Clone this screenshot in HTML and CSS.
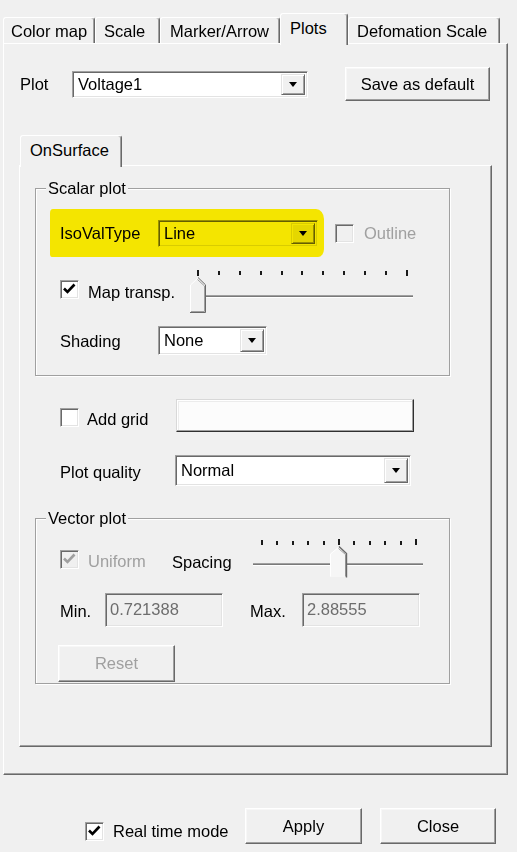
FILE: index.html
```html
<!DOCTYPE html>
<html lang="en">
<head>
<meta charset="utf-8">
<title>Plots</title>
<link rel="stylesheet" href="styles.css">
</head>
<body>
<div class="dialog">
  <div class="tabs">
    <div class="tab t-color">Color map</div>
    <div class="tab t-scale">Scale</div>
    <div class="tab t-marker">Marker/Arrow</div>
    <div class="tab active t-plots">Plots</div>
    <div class="tab t-deform">Defomation Scale</div>
  </div>
  <div class="pane">
    <div class="plot-row">
      <span class="plot-lbl">Plot</span>
      <div class="combo c-plot"><span class="val">Voltage1</span><span class="drop"><i class="tri"></i></span></div>
      <div class="btn save-btn">Save as default</div>
    </div>
    <div class="tabs inner-tabs">
      <div class="tab active t-onsurf">OnSurface</div>
    </div>
    <div class="inner-pane">
      <div class="group g-scalar">
        <div class="group-title">Scalar plot</div>
        <div class="iso-row">
          <div class="hl">
            <span class="iso-lbl">IsoValType</span>
            <div class="combo c-iso"><span class="val">Line</span><span class="drop"><i class="tri"></i></span></div>
          </div>
          <span class="check disabled outline-check"></span>
          <span class="dim outline-lbl">Outline</span>
        </div>
        <div class="slider-row">
          <span class="check mt-check"><svg width="17" height="17" viewBox="0 0 17 17"><path d="M3 7.5 L6.5 11 L13.5 3.5" fill="none" stroke="#000" stroke-width="2.6"/></svg></span>
          <span class="mt-lbl">Map transp.</span>
          <svg class="slider" width="230" height="50" viewBox="0 0 230 50">
            <g fill="#1a1a1a">
              <rect x="10" y="4" width="2" height="6"/>
              <rect x="31" y="5" width="2" height="4"/>
              <rect x="52" y="5" width="2" height="4"/>
              <rect x="73" y="5" width="2" height="4"/>
              <rect x="94" y="5" width="2" height="4"/>
              <rect x="114" y="5" width="2" height="4"/>
              <rect x="135" y="5" width="2" height="4"/>
              <rect x="156" y="5" width="2" height="4"/>
              <rect x="177" y="5" width="2" height="4"/>
              <rect x="198" y="5" width="2" height="4"/>
              <rect x="219" y="4" width="2" height="6"/>
            </g>
            <rect x="13" y="29" width="213" height="1" fill="#a0a0a0"/>
            <rect x="13" y="30" width="213" height="1" fill="#7a7a7a"/>
            <rect x="13" y="31" width="213" height="1" fill="#ffffff"/>
            <polygon points="3,46 3,19 10.5,12 18,19 18,46" fill="#f0f0f0"/>
            <polyline points="3.5,45.5 3.5,19 10.5,12.5" fill="none" stroke="#ffffff"/>
            <polyline points="10.5,13.5 17.5,20 17.5,45.5 4,45.5" fill="none" stroke="#a0a0a0"/>
            <polyline points="11,11.5 18.5,18.8 18.5,46.5 3,46.5" fill="none" stroke="#696969"/>
          </svg>
        </div>
        <div class="shading-row">
          <span class="shading-lbl">Shading</span>
          <div class="combo c-shading"><span class="val">None</span><span class="drop"><i class="tri"></i></span></div>
        </div>
      </div>
      <div class="grid-row">
        <span class="check grid-check"></span>
        <span class="grid-lbl">Add grid</span>
        <div class="color-btn"></div>
      </div>
      <div class="quality-row">
        <span class="quality-lbl">Plot quality</span>
        <div class="combo c-quality"><span class="val">Normal</span><span class="drop"><i class="tri"></i></span></div>
      </div>
      <div class="group g-vector">
        <div class="group-title">Vector plot</div>
        <div class="uniform-row">
          <span class="check disabled u-check"><svg width="17" height="17" viewBox="0 0 17 17"><path d="M3 7.5 L6.5 11 L13.5 3.5" fill="none" stroke="#a0a0a0" stroke-width="2.6"/></svg></span>
          <span class="dim uniform-lbl">Uniform</span>
          <span class="spacing-lbl">Spacing</span>
          <svg class="slider" width="176" height="46" viewBox="0 0 176 46">
            <g fill="#1a1a1a">
              <rect x="11" y="4" width="2" height="5"/>
              <rect x="26" y="5" width="2" height="4"/>
              <rect x="42" y="5" width="2" height="4"/>
              <rect x="57" y="5" width="2" height="4"/>
              <rect x="73" y="5" width="2" height="4"/>
              <rect x="88" y="3" width="2" height="6"/>
              <rect x="103" y="5" width="2" height="4"/>
              <rect x="119" y="5" width="2" height="4"/>
              <rect x="134" y="5" width="2" height="4"/>
              <rect x="150" y="5" width="2" height="4"/>
              <rect x="165" y="3" width="2" height="6"/>
            </g>
            <rect x="3" y="27" width="170" height="1" fill="#a0a0a0"/>
            <rect x="3" y="28" width="170" height="1" fill="#7a7a7a"/>
            <rect x="3" y="29" width="170" height="1" fill="#ffffff"/>
            <polygon points="80,41 80,18 88.5,11 97,18 97,41" fill="#f6f6f6"/>
            <polyline points="80.5,40.5 80.5,18 88.5,11.5" fill="none" stroke="#ffffff"/>
            <polyline points="88.5,12.5 95.5,18.5 95.5,40.5" fill="none" stroke="#a0a0a0"/>
            <polyline points="89,10.5 96.5,17.5 96.5,41.5" fill="none" stroke="#696969" stroke-width="1.4"/>
          </svg>
        </div>
        <div class="minmax-row">
          <span class="min-lbl">Min.</span>
          <div class="tbox">0.721388</div>
          <span class="max-lbl">Max.</span>
          <div class="tbox">2.88555</div>
        </div>
        <div class="btn reset-btn dim">Reset</div>
      </div>
    </div>
  </div>
  <div class="bottom-row">
    <span class="check rt-check"><svg width="17" height="17" viewBox="0 0 17 17"><path d="M3 7.5 L6.5 11 L13.5 3.5" fill="none" stroke="#000" stroke-width="2.6"/></svg></span>
    <span class="rt-lbl">Real time mode</span>
    <div class="btn apply-btn">Apply</div>
    <div class="btn close-btn">Close</div>
  </div>
</div>
</body>
</html>
```

FILE: styles.css
```css
* { box-sizing: border-box; }
html, body { margin: 0; padding: 0; }
body {
  width: 517px;
  height: 852px;
  overflow: hidden;
  background: #f0f0f0;
  font-family: "Liberation Sans", Arial, sans-serif;
  font-size: 16.5px;
  color: #000;
}
.dialog { padding-top: 13px; }

/* tabs */
.tabs { display: flex; align-items: flex-end; height: 30px; padding-left: 3px; }
.tab {
  height: 26px;
  padding: 1px 0 0 8px;
  line-height: 24px;
  border-top: 1px solid #fff;
  border-left: 1px solid #fff;
  border-right: 1px solid #696969;
  box-shadow: inset -1px 0 #a0a0a0;
  border-radius: 3px 3px 0 0;
  white-space: nowrap;
  background: #f0f0f0;
}
.tab.active {
  height: 32px;
  margin-bottom: -2px;
  padding-top: 0;
  line-height: 28px;
  position: relative;
  z-index: 1;
}
.t-color { width: 92px; padding-left: 7px; }
.t-scale { width: 65px; }
.t-marker { width: 120px; padding-left: 9px; }
.t-plots { width: 68px; padding-left: 9px; }
.t-deform { width: 152px; }

/* panes */
.pane {
  margin-left: 3px;
  width: 505px;
  height: 732px;
  border: 1px solid;
  border-color: #fff #696969 #696969 #fff;
  box-shadow: inset -1px -1px #a0a0a0;
  padding: 23px 0 0 15px;
}
.plot-row { display: flex; align-items: center; height: 34px; }
.plot-lbl { width: 53px; padding: 1px 0 0 1px; }
.c-plot { width: 236px; height: 27px; }
.save-btn { margin-left: 37px; width: 145px; height: 34px; }

.inner-tabs { height: 32px; margin-top: 32px; padding-left: 0; }
.t-onsurf { width: 102px; margin-left: 1px; height: 34px; line-height: 30px; padding-left: 9px; }

.inner-pane {
  width: 473px;
  height: 582px;
  border: 1px solid;
  border-color: #fff #696969 #696969 #fff;
  box-shadow: inset -1px -1px #a0a0a0;
  padding: 22px 0 0 15px;
}

/* group boxes */
.group {
  width: 415px;
  border: 1px solid #a0a0a0;
  box-shadow: inset 1px 1px #fff, 1px 1px #fff;
}
.group-title {
  margin: -11px 0 0 10px;
  padding: 0 2px;
  line-height: 20px;
  background: #f0f0f0;
  width: fit-content;
}
.g-scalar { height: 188px; }
.g-vector { height: 166px; margin-top: 32px; }

/* controls */
.combo {
  display: flex;
  border: 1px solid;
  border-color: #a0a0a0 #fff #fff #a0a0a0;
  box-shadow: inset 1px 1px #696969, inset -1px -1px #e3e3e3;
  background: #fff;
  padding: 2px;
}
.combo .val { flex: 1; display: flex; align-items: center; padding-left: 3px; }
.combo .drop {
  width: 24px;
  display: flex;
  align-items: center;
  justify-content: center;
  background: #f0f0f0;
  border: 1px solid;
  border-color: #e3e3e3 #696969 #696969 #e3e3e3;
  box-shadow: inset 1px 1px #fff, inset -1px -1px #a0a0a0;
}
.tri {
  display: block;
  width: 0;
  height: 0;
  border-left: 4.5px solid transparent;
  border-right: 4.5px solid transparent;
  border-top: 5px solid #000;
}
.btn {
  display: flex;
  align-items: center;
  justify-content: center;
  background: #f0f0f0;
  border: 1px solid;
  border-color: #fff #696969 #696969 #fff;
  box-shadow: inset -1px -1px #a0a0a0, inset 1px 1px #f7f7f7;
}
.check {
  display: block;
  flex: none;
  width: 19px;
  height: 19px;
  border: 1px solid;
  border-color: #a0a0a0 #fff #fff #a0a0a0;
  box-shadow: inset 1px 1px #696969, inset -1px -1px #e3e3e3;
  background: #fff;
}
.check svg { display: block; }
.check.disabled { background: #f0f0f0; }
.dim { color: #a0a0a0; }
.slider { display: block; flex: none; }

/* scalar plot rows */
.iso-row { display: flex; align-items: center; margin-top: 11px; }
.hl {
  margin-left: 14px;
  width: 274px;
  height: 48px;
  background: #f4e500;
  border-radius: 3px 8px 6px 2px / 4px 10px 8px 3px;
  display: flex;
  align-items: center;
  padding-left: 10px;
}
.iso-lbl { width: 98px; padding-top: 1px; }
.c-iso { width: 160px; height: 27px; mix-blend-mode: multiply; }
.outline-check { margin-left: 11px; }
.outline-lbl { margin-left: 10px; }

.slider-row { display: flex; align-items: flex-start; margin-top: 9px; height: 50px; padding-left: 24px; }
.mt-check { margin-top: 14px; }
.mt-lbl { margin: 16px 0 0 9px; width: 99px; line-height: 20px; }

.shading-row { display: flex; align-items: center; margin-top: 10px; padding-left: 24px; }
.shading-lbl { width: 98px; padding-top: 1px; }
.c-shading { width: 109px; height: 29px; }

/* grid / quality */
.grid-row { display: flex; align-items: flex-start; margin-top: 23px; height: 33px; padding-left: 25px; }
.grid-check { margin-top: 9px; }
.grid-lbl { margin: 10px 0 0 8px; width: 89px; line-height: 20px; }
.color-btn {
  width: 238px;
  height: 33px;
  background: #fcfcfc;
  border: 1px solid;
  border-color: #d8d8d8 #303030 #303030 #d8d8d8;
  box-shadow: inset -1px -1px #a0a0a0, inset 1px 1px #fff, inset 2px 2px #ececec;
}
.quality-row { display: flex; align-items: center; margin-top: 23px; height: 31px; padding-left: 25px; }
.quality-lbl { width: 115px; padding-top: 3px; }
.c-quality { width: 236px; height: 31px; }

/* vector plot */
.uniform-row { display: flex; align-items: flex-start; margin-top: 8px; height: 46px; padding-left: 24px; }
.u-check { margin-top: 14px; }
.uniform-lbl { margin: 15px 0 0 9px; width: 84px; line-height: 20px; }
.spacing-lbl { margin-top: 16px; width: 78px; line-height: 20px; }

.minmax-row { display: flex; align-items: center; margin-top: 11px; height: 34px; padding-left: 24px; }
.min-lbl { width: 45px; padding-top: 2px; }
.max-lbl { margin-left: 27px; width: 52px; padding-top: 2px; }
.tbox {
  width: 118px;
  height: 34px;
  border: 1px solid;
  border-color: #a0a0a0 #fff #fff #a0a0a0;
  box-shadow: inset 1px 1px #696969, inset -1px -1px #e3e3e3;
  background: #f0f0f0;
  color: #6d6d6d;
  padding: 2px 0 0 4px;
  line-height: 26px;
}
.reset-btn { margin: 18px 0 0 22px; width: 117px; height: 37px; }

/* bottom */
.bottom-row { display: flex; align-items: flex-start; margin-top: 33px; height: 36px; }
.rt-check { margin: 14px 0 0 85px; }
.rt-lbl { margin: 13px 0 0 9px; width: 132px; line-height: 20px; }
.apply-btn { width: 117px; height: 36px; }
.close-btn { margin-left: 18px; width: 116px; height: 36px; }
```
